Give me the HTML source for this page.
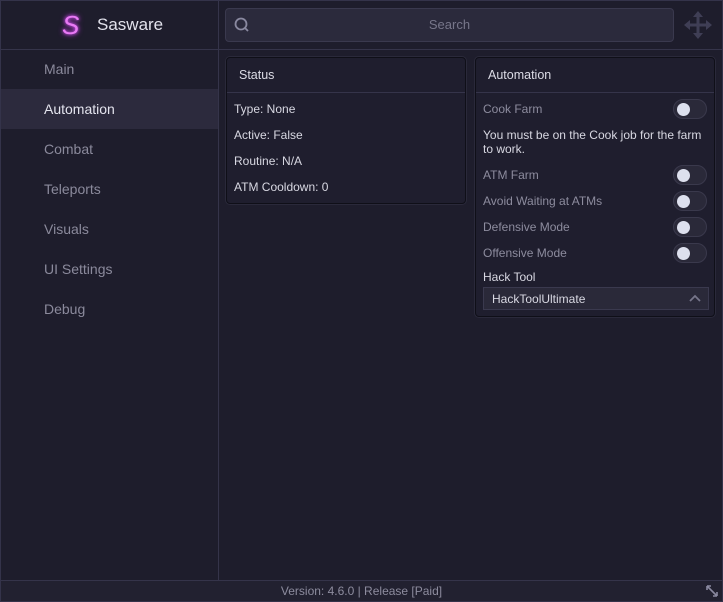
<!DOCTYPE html>
<html><head><meta charset="utf-8"><style>
*{margin:0;padding:0;box-sizing:border-box}
body{width:723px;height:602px;background:#1e1d2c;font-family:"Liberation Sans",sans-serif;font-size:12px;color:#d8d8e2;position:relative;overflow:hidden}
.abs{position:absolute}
.frame{left:0;top:0;width:723px;height:602px;border:1px solid #34334a}
.hline{height:1px;background:#35344a}
.vline{width:1px;background:#35344a}
.nav{left:1px;width:217px;height:40px;line-height:40px;padding-left:43px;color:#8b8a9c;font-size:14px}
.nav.sel{background:#2c2a3d;color:#e4e4ee}
.panel{background:#1f1e2e;border:1px solid #0f0f18;border-radius:4px;box-shadow:0 0 0 1px #2a293a}
.ph{height:35px;line-height:34px;padding-left:12px;border-bottom:1px solid #35344a;color:#dcdce6;font-size:12.5px}
.row{position:absolute;left:7px;font-size:12px}
.tog{position:absolute;right:7px;width:34px;height:20px;border-radius:10px;background:#2a2939;border:1px solid #3a394c}
.tog::after{content:"";position:absolute;left:3px;top:3px;width:13px;height:13px;border-radius:50%;background:#dde0ee}
.dim{color:#8d8c9e}
</style></head><body>
<div class="abs frame"></div>
<div class="abs hline" style="left:1px;top:49px;width:721px"></div>
<div class="abs vline" style="left:218px;top:1px;height:579px"></div>
<div class="abs hline" style="left:1px;top:580px;width:721px"></div>
<div class="abs" style="left:1px;top:581px;width:721px;height:20px;background:#222130"></div>
<div class="abs" style="left:62px;top:10px;font-size:26px;font-style:italic;color:#e97af5;text-shadow:0 0 6px #c03de0,0 0 3px #d050f0;font-family:'Liberation Sans',sans-serif;line-height:30px">S</div>
<div class="abs" style="left:97px;top:15px;font-size:17px;color:#e2e2ec">Sasware</div>
<div class="abs" style="left:225px;top:8px;width:449px;height:34px;background:#2b2a3c;border:1px solid #3a394e;border-radius:4px"></div>
<svg class="abs" style="left:233px;top:16px" width="18" height="18" viewBox="0 0 18 18"><circle cx="8" cy="8" r="5.5" fill="none" stroke="#8a89a0" stroke-width="1.8"/><line x1="12" y1="12" x2="15" y2="15" stroke="#8a89a0" stroke-width="1.8"/></svg>
<div class="abs" style="left:225px;top:17px;width:449px;text-align:center;color:#77768a;font-size:13px">Search</div>
<svg class="abs" style="left:683px;top:10px" width="30" height="30" viewBox="0 0 30 30" fill="#3f3e55"><rect x="13.5" y="5" width="3" height="20"/><rect x="5" y="13.5" width="20" height="3"/><path d="M15 1l5 6h-10zM15 29l5-6h-10zM1 15l6-5v10zM29 15l-6-5v10z"/></svg>
<div class="abs nav" style="top:49px">Main</div>
<div class="abs nav sel" style="top:89px">Automation</div>
<div class="abs nav" style="top:129px">Combat</div>
<div class="abs nav" style="top:169px">Teleports</div>
<div class="abs nav" style="top:209px">Visuals</div>
<div class="abs nav" style="top:249px">UI Settings</div>
<div class="abs nav" style="top:289px">Debug</div>
<div class="abs panel" style="left:226px;top:57px;width:240px;height:147px">
<div class="ph">Status</div>
<div class="row" style="top:44px">Type: None</div>
<div class="row" style="top:70px">Active: False</div>
<div class="row" style="top:96px">Routine: N/A</div>
<div class="row" style="top:122px">ATM Cooldown: 0</div>
</div>
<div class="abs panel" style="left:475px;top:57px;width:240px;height:260px">
<div class="ph">Automation</div>
<div class="row dim" style="top:44px">Cook Farm</div><div class="tog" style="top:41px"></div>
<div class="row" style="top:70px;line-height:14px;width:228px">You must be on the Cook job for the farm to work.</div>
<div class="row dim" style="top:110px">ATM Farm</div><div class="tog" style="top:107px"></div>
<div class="row dim" style="top:136px">Avoid Waiting at ATMs</div><div class="tog" style="top:133px"></div>
<div class="row dim" style="top:162px">Defensive Mode</div><div class="tog" style="top:159px"></div>
<div class="row dim" style="top:188px">Offensive Mode</div><div class="tog" style="top:185px"></div>
<div class="row" style="top:212px">Hack Tool</div>
<div class="abs" style="left:7px;top:229px;width:226px;height:23px;background:#2a2939;border:1px solid #3a394e;line-height:22px;padding-left:8px">HackToolUltimate
<svg class="abs" style="right:7px;top:6px" width="12" height="8" viewBox="0 0 12 8"><path d="M1 7l5-5 5 5" fill="none" stroke="#77768a" stroke-width="1.8"/></svg></div>
</div>
<div class="abs" style="left:0;top:584px;width:723px;text-align:center;color:#8d8c9e;font-size:12px">Version: 4.6.0 | Release [Paid]</div>
<svg class="abs" style="left:705px;top:584px" width="14" height="14" viewBox="0 0 14 14" stroke="#8a89a0" stroke-width="1.6" fill="none"><path d="M2 2l10 10M2 2h4M2 2v4M12 12h-4M12 12v-4"/></svg>
</body></html>
